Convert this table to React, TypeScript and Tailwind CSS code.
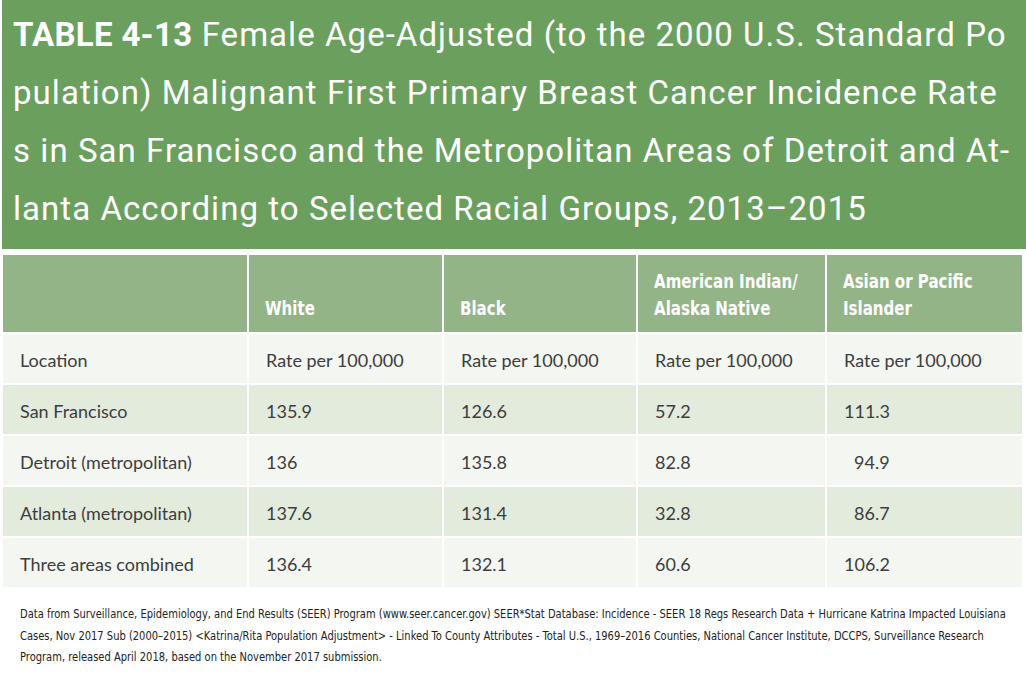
import React from "react";

const headers = ["", "White", "Black", "American Indian/\nAlaska Native", "Asian or Pacific\nIslander"];

const rows: { cells: string[]; indent?: number[] }[] = [
  { cells: ["Location", "Rate per 100,000", "Rate per 100,000", "Rate per 100,000", "Rate per 100,000"] },
  { cells: ["San Francisco", "135.9", "126.6", "57.2", "111.3"] },
  { cells: ["Detroit (metropolitan)", "136", "135.8", "82.8", "94.9"], indent: [4] },
  { cells: ["Atlanta (metropolitan)", "137.6", "131.4", "32.8", "86.7"], indent: [4] },
  { cells: ["Three areas combined", "136.4", "132.1", "60.6", "106.2"] },
];

export default function App() {
  return (
    <div className="w-[1026px] h-[674px] bg-white overflow-hidden">
      <div className="ml-[2px] h-[249px] bg-[#6a9f5e] pl-[11px] pt-[6px] text-white text-[33px] tracking-[1.05px] leading-[58px] font-['Roboto',sans-serif] whitespace-nowrap">
        <div><span className="font-bold tracking-[0.3px]">TABLE 4-13</span> Female Age-Adjusted (to the 2000 U.S. Standard Po</div>
        <div>pulation) Malignant First Primary Breast Cancer Incidence Rate</div>
        <div>s in San Francisco and the Metropolitan Areas of Detroit and At-</div>
        <div>lanta According to Selected Racial Groups, 2013–2015</div>
      </div>
      <div className="mt-[6px] ml-[3px] w-[1020px] grid grid-cols-[244px_193px_192px_187px_195px] gap-[2px]">
        {headers.map((h, i) => (
          <div
            key={"h" + i}
            className="h-[77px] bg-[#93b487] text-white font-bold text-[19px] leading-[27px] flex items-end pb-[10px] pl-[16px] font-['DejaVu_Sans_Condensed',sans-serif]"
          >
            <span className="inline-block origin-left scale-x-[0.88] whitespace-pre-line">{h}</span>
          </div>
        ))}
        {rows.map((r, ri) =>
          r.cells.map((c, ci) => (
            <div
              key={ri + "-" + ci}
              className={
                "h-[49px] flex items-center pl-[17px] pt-[3px] text-[18px] text-[#3d3d3d] font-['Lato',sans-serif] " +
                (ri % 2 === 0 ? "bg-[#f4f6f2]" : "bg-[#e3ebdd]")
              }
            >
              <span className={r.indent && r.indent.includes(ci) ? "pl-[10px]" : ""}>{c}</span>
            </div>
          ))
        )}
      </div>
      <div className="mt-[16px] ml-[20px] w-[1000px] text-[13px] leading-[21.5px] text-[#222] font-['DejaVu_Sans_Condensed',sans-serif] whitespace-nowrap">
        <div className="origin-left scale-x-[0.85]">
          <div>Data from Surveillance, Epidemiology, and End Results (SEER) Program (www.seer.cancer.gov) SEER*Stat Database: Incidence - SEER 18 Regs Research Data + Hurricane Katrina Impacted Louisiana</div>
          <div>Cases, Nov 2017 Sub (2000–2015) &lt;Katrina/Rita Population Adjustment&gt; - Linked To County Attributes - Total U.S., 1969–2016 Counties, National Cancer Institute, DCCPS, Surveillance Research</div>
          <div>Program, released April 2018, based on the November 2017 submission.</div>
        </div>
      </div>
    </div>
  );
}
